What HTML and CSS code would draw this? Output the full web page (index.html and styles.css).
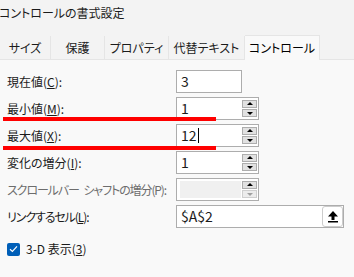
FILE: index.html
```html
<!DOCTYPE html>
<html>
<head>
  <title>コントロールの書式設定</title>
  <link rel="stylesheet" href="styles.css">
</head>
<body>
  <div class="title">コントロールの書式設定</div>

  <div class="tabs">
    <div class="tab tab-size">サイズ</div>
    <div class="tab tab-protect">保護</div>
    <div class="tab tab-prop">プロパティ</div>
    <div class="tab tab-alt">代替テキスト</div>
    <div class="tab tab-ctrl active">コントロール</div>
  </div>

  <div class="panel">
    <div class="form">
      <div class="lbl">現在値(<u>C</u>):</div>
      <div class="box box-short"><span class="val">3</span></div>

      <div class="lbl">最小値(<u>M</u>):</div>
      <div class="box box-spin">
        <span class="val">1</span>
        <div class="spin"><span class="up"></span><span class="down"></span></div>
      </div>

      <div class="lbl">最大値(<u>X</u>):</div>
      <div class="box box-spin">
        <span class="val">12</span><span class="caret"></span>
        <div class="spin"><span class="up"></span><span class="down"></span></div>
      </div>

      <div class="lbl">変化の増分(<u>I</u>):</div>
      <div class="box box-spin">
        <span class="val">1</span>
        <div class="spin"><span class="up"></span><span class="down"></span></div>
      </div>

      <div class="lbl tight disabled">スクロールバー シャフトの増分(P):</div>
      <div class="box box-spin box-off">
        <span class="fill"></span>
        <div class="spin"><span class="up"></span><span class="down off"></span></div>
      </div>

      <div class="lbl tight">リンクするセル(<u>L</u>):</div>
      <div class="box box-long">
        <span class="val">$A$2</span>
        <div class="pick">
          <svg width="12" height="13" viewBox="0 0 12 13">
            <path d="M6 1 L11 6.5 L7.5 6.5 L7.5 10 L4.5 10 L4.5 6.5 L1 6.5 Z" fill="#000"/>
            <rect x="1" y="11" width="10" height="1.5" fill="#000"/>
          </svg>
        </div>
      </div>
    </div>

    <div class="check">
      <span class="checkbox">
        <svg width="9" height="8" viewBox="0 0 9 8">
          <path d="M1 4.2 L3.4 6.4 L8 1.4" fill="none" stroke="#fff" stroke-width="1.2"/>
        </svg>
      </span>
      <span>3-D 表示(<u>3</u>)</span>
    </div>

    <div class="mark mark-min"></div>
    <div class="mark mark-max"></div>
  </div>
</body>
</html>
```

FILE: styles.css
```css
body {
  margin: 0;
  background-color: #f9f9f9;
  font-family: "Noto Sans CJK JP", "Noto Sans", sans-serif;
  font-feature-settings: "palt";
  color: #1b1b1b;
  overflow: hidden;
}

.title {
  background-color: #f3f3f3;
  height: 37px;
  font-size: 12px;
  line-height: 26px;
  margin-left: -1px;
}

.tabs {
  display: flex;
  height: 23px;
  background-color: #f3f3f3;
  border-bottom: 1px solid #e5e5e5;
  margin-top: -1px;
  align-items: flex-end;
}

.tab {
  height: 23px;
  box-sizing: border-box;
  border-right: 1px solid #e5e5e5;
  font-size: 12px;
  line-height: 23px;
  text-align: center;
}

.tab-size { width: 51px; }
.tab-protect { width: 54px; }
.tab-prop { width: 64px; }
.tab-alt { width: 76px; }

.tab.active {
  width: 75px;
  height: 25px;
  margin-bottom: -1px;
  background-color: #f9f9f9;
  border: 1px solid #e5e5e5;
  border-bottom: none;
  border-left: none;
  line-height: 24px;
  color: #000;
}

.panel {
  position: relative;
  padding: 10px 0 0 7px;
}

.form {
  display: grid;
  grid-template-columns: 169px auto;
  grid-auto-rows: 23px;
  row-gap: 4px;
  align-items: center;
  justify-items: start;
}

.lbl {
  font-size: 12px;
  line-height: 23px;
  white-space: nowrap;
}

.lbl.tight {
  letter-spacing: -1.1px;
  word-spacing: 3px;
}

.lbl.disabled {
  color: #6d6d6d;
}

.box {
  position: relative;
  height: 23px;
  box-sizing: border-box;
  background-color: #fff;
  border: 1px solid #adadad;
  display: flex;
  align-items: center;
}

.box-short { width: 66px; }
.box-spin { width: 83px; }
.box-long { width: 168px; }

.val {
  font-size: 14px;
  padding-left: 4px;
  line-height: 21px;
}

.caret {
  width: 1px;
  height: 15px;
  background-color: #000;
  margin-left: 1px;
}

.spin {
  margin-left: auto;
  width: 15px;
  height: 21px;
  display: flex;
  flex-direction: column;
  justify-content: center;
  gap: 1px;
  padding-right: 1px;
}

.spin span {
  height: 8px;
  box-sizing: border-box;
  border: 1px solid #adadad;
  background-color: #e1e1e1;
  position: relative;
}

.spin span::after {
  content: "";
  position: absolute;
  left: 4px;
  width: 0;
  height: 0;
  border-left: 3px solid transparent;
  border-right: 3px solid transparent;
}

.spin .up::after {
  top: 1px;
  border-bottom: 3px solid #000;
}

.spin .down::after {
  top: 2px;
  border-top: 3px solid #000;
}

.spin .down.off {
  border-color: #cfcfcf;
  background-color: #ececec;
}

.spin .down.off::after {
  border-top-color: #a0a0a0;
}

.box-off .fill {
  width: 61px;
  height: 17px;
  margin-left: 3px;
  background-color: #f0f0f0;
}

.pick {
  margin-left: auto;
  width: 21px;
  height: 21px;
  box-sizing: border-box;
  border: 1px solid #cccccc;
  border-radius: 3px;
  display: flex;
  align-items: center;
  justify-content: center;
}

.check {
  display: flex;
  align-items: center;
  gap: 6px;
  margin-top: 13px;
  font-size: 12px;
  line-height: 16px;
}

.checkbox {
  width: 13px;
  height: 13px;
  border-radius: 2px;
  background-color: #005fb8;
  display: flex;
  align-items: center;
  justify-content: center;
}

.mark {
  position: absolute;
  left: 3px;
  width: 213px;
  height: 4px;
  background-color: #ff0000;
}

.mark-min { top: 57px; }
.mark-max { top: 86px; }
```
